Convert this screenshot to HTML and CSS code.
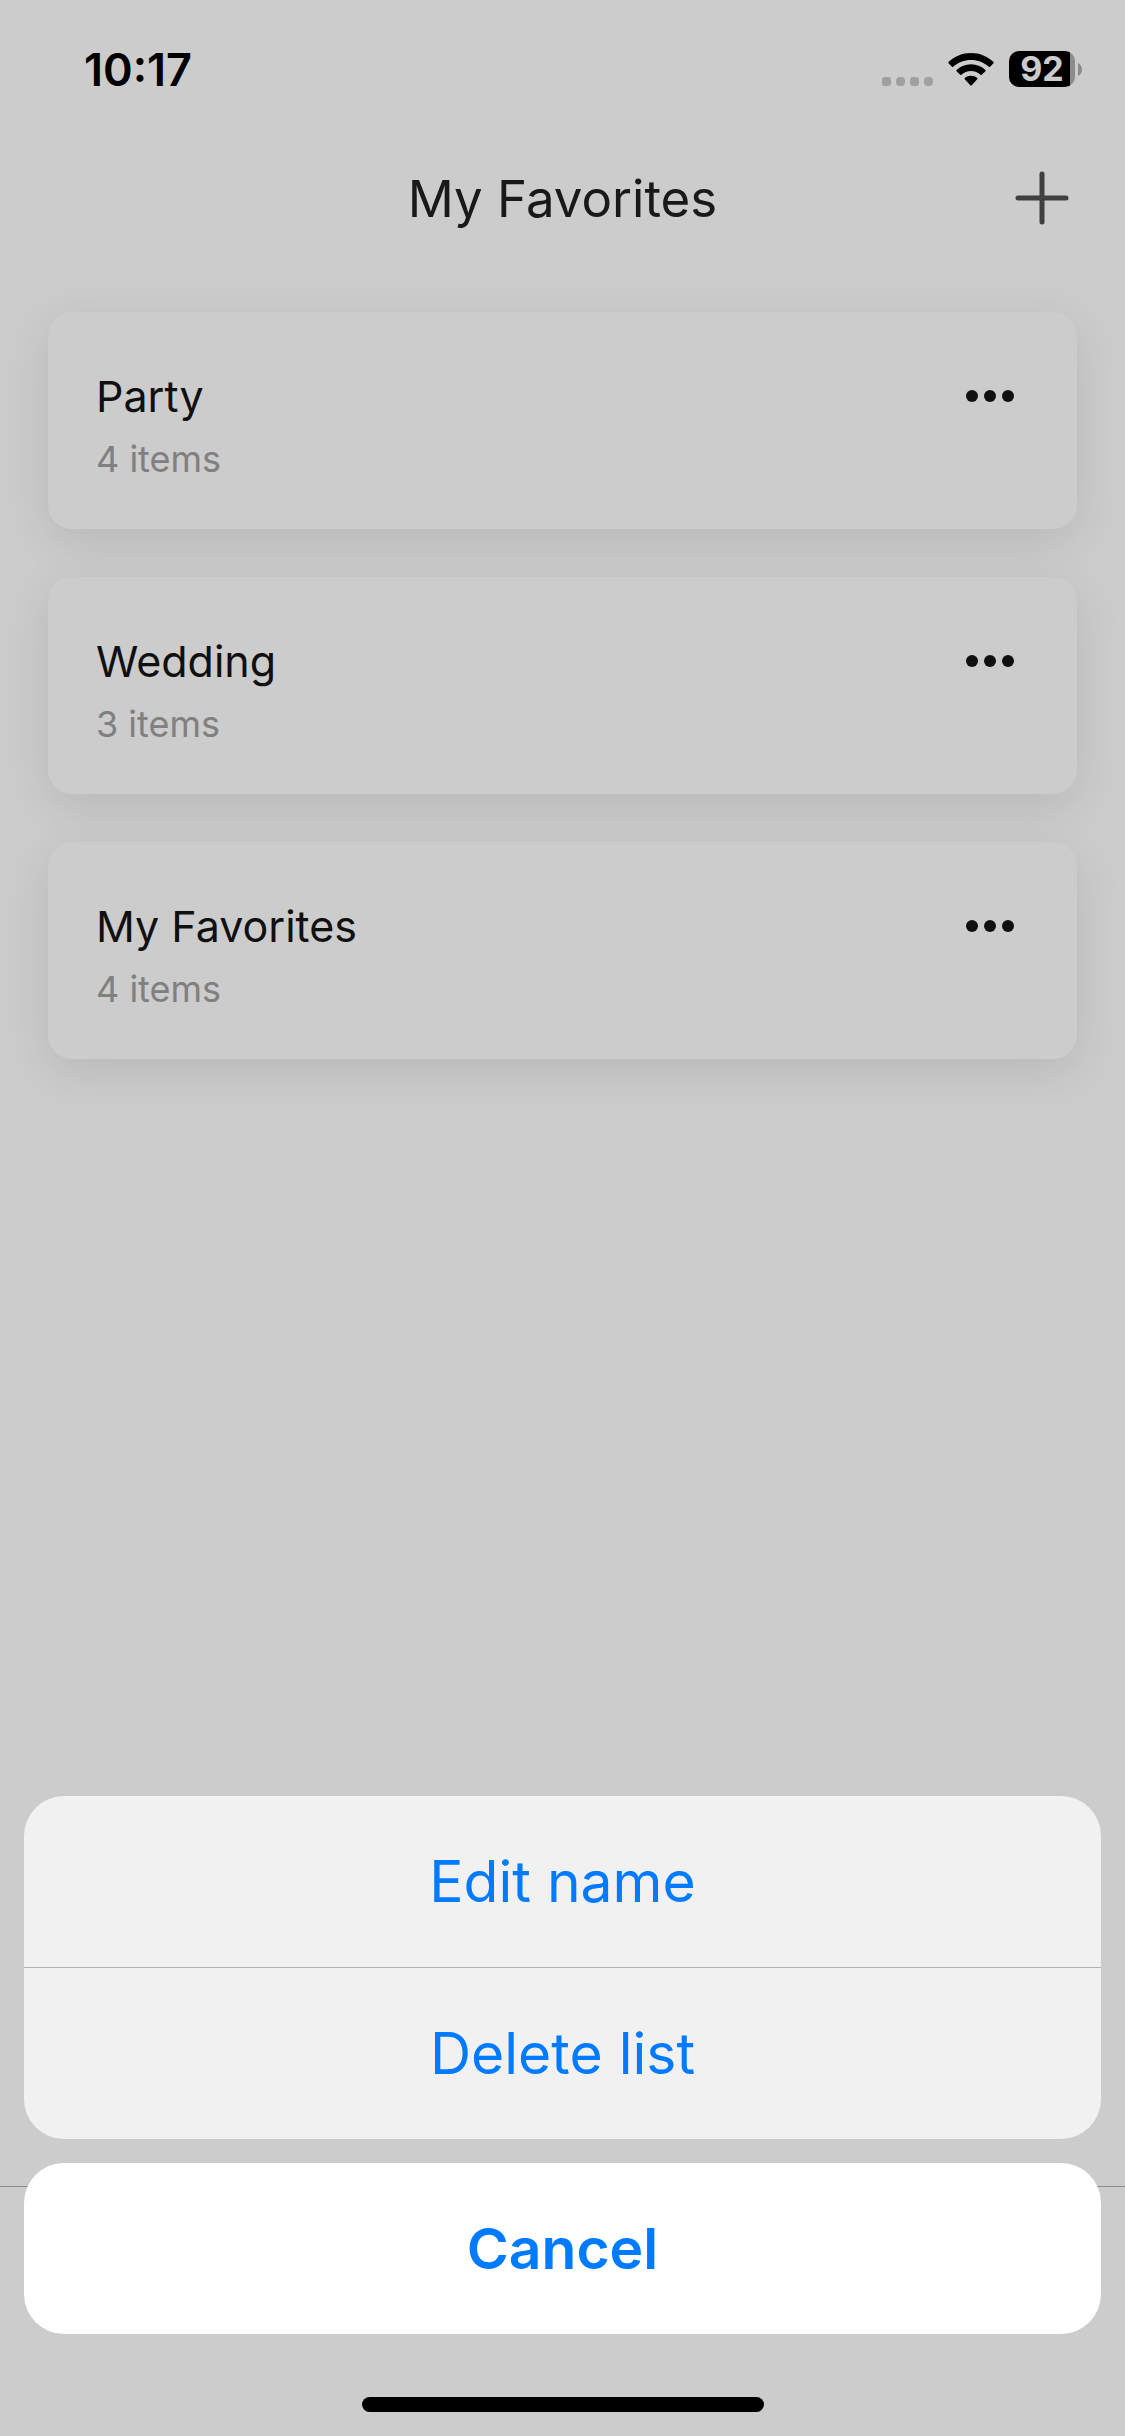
FILE: index.html
```
<!DOCTYPE html>
<html lang="en">
<head>
    <meta charset="UTF-8">
    <meta name="viewport" content="width=device-width, initial-scale=1.0">
    <title>My Favorites</title>
    <link rel="stylesheet" href="styles.css">
</head>
<body>
    <div class="app">
        <div class="status-bar">
            <span class="status-time">10:17</span>
            <div class="status-icons">
                <svg class="signal" viewBox="0 0 51 9" aria-hidden="true">
                    <rect x="0" width="9" height="9" rx="3"/>
                    <rect x="14" width="9" height="9" rx="4"/>
                    <rect x="28" width="9" height="9" rx="3"/>
                    <rect x="42" width="9" height="9" rx="4"/>
                </svg>
                <svg class="wifi" viewBox="0 0 46 33" aria-hidden="true">
                    <path d="M23 0C14.300 0 6.400 3.400 .500 9Q0 9.600 .500 10.200L4 13.700Q4.600 14.300 5.200 13.700C9.900 9.400 16.100 6.900 23 6.900S36.100 9.400 40.800 13.700Q41.400 14.300 42 13.700L45.500 10.200Q46 9.600 45.500 9C39.600 3.400 31.700 0 23 0Z"/>
                    <path d="M23 11.300C17.500 11.300 12.400 13.500 8.600 17Q8 17.600 8.600 18.200L12.200 21.800Q12.800 22.300 13.400 21.800C15.900 19.500 19.300 18.100 23 18.100S30.100 19.500 32.600 21.800Q33.200 22.300 33.800 21.800L37.400 18.200Q38 17.600 37.400 17C33.600 13.500 28.500 11.300 23 11.300Z"/>
                    <path d="M23 22.700C20.700 22.700 18.500 23.500 16.800 24.900Q16.100 25.500 16.800 26.200L22.300 32.200Q23 32.900 23.700 32.200L29.200 26.200Q29.900 25.500 29.200 24.900C27.500 23.500 25.300 22.700 23 22.700Z"/>
                </svg>
                <div class="battery">
                    <span class="battery-level">92</span>
                    <svg class="battery-tip" viewBox="0 0 4 13" aria-hidden="true">
                        <path d="M0 0C2.500 1.200 4 3.500 4 6.500S2.500 11.800 0 13Z"/>
                    </svg>
                </div>
            </div>
        </div>

        <header class="header">
            <h1>My Favorites</h1>
            <button class="add-button" aria-label="Add list">
                <svg viewBox="0 0 54 54" aria-hidden="true">
                    <path d="M27 3V51M3 27H51"/>
                </svg>
            </button>
        </header>

        <ul class="lists">
            <li class="card">
                <div class="card-text">
                    <h2>Party</h2>
                    <p>4 items</p>
                </div>
                <button class="more-button" aria-label="Options for Party">
                    <svg viewBox="0 0 48 12" aria-hidden="true">
                        <circle cx="6" cy="6" r="6"/>
                        <circle cx="24" cy="6" r="6"/>
                        <circle cx="42" cy="6" r="6"/>
                    </svg>
                </button>
            </li>
            <li class="card">
                <div class="card-text">
                    <h2>Wedding</h2>
                    <p>3 items</p>
                </div>
                <button class="more-button" aria-label="Options for Wedding">
                    <svg viewBox="0 0 48 12" aria-hidden="true">
                        <circle cx="6" cy="6" r="6"/>
                        <circle cx="24" cy="6" r="6"/>
                        <circle cx="42" cy="6" r="6"/>
                    </svg>
                </button>
            </li>
            <li class="card">
                <div class="card-text">
                    <h2>My Favorites</h2>
                    <p>4 items</p>
                </div>
                <button class="more-button" aria-label="Options for My Favorites">
                    <svg viewBox="0 0 48 12" aria-hidden="true">
                        <circle cx="6" cy="6" r="6"/>
                        <circle cx="24" cy="6" r="6"/>
                        <circle cx="42" cy="6" r="6"/>
                    </svg>
                </button>
            </li>
        </ul>

        <div class="tab-bar"></div>
    </div>

    <div class="overlay">
        <div class="sheet" role="dialog" aria-label="List options">
            <div class="sheet-group">
                <button class="sheet-button">Edit name</button>
                <button class="sheet-button">Delete list</button>
            </div>
            <button class="sheet-button cancel">Cancel</button>
        </div>
        <div class="home-indicator"></div>
    </div>
</body>
</html>
```
FILE: styles.css
```
:root {
    --blue: #007aff;
    --text: #141414;
    --muted: #a0a0a0;
}

* {
    margin: 0;
    padding: 0;
    box-sizing: border-box;
    font-family: Inter, "Liberation Sans", sans-serif;
}

body {
    background-color: white;
}

button {
    background: none;
    border: none;
    cursor: pointer;
}

svg {
    display: block;
}

.app {
    min-height: 100vh;
    display: flex;
    flex-direction: column;
}

/* Status bar */
.status-bar {
    display: flex;
    justify-content: space-between;
    align-items: center;
    height: 138px;
    padding: 0 43px 0 84px;
}

.status-time {
    font-size: 45px;
    font-weight: 600;
}

.status-icons {
    display: flex;
    align-items: center;
    gap: 15px;
}

.signal {
    width: 51px;
    height: 9px;
    margin-top: 24px;
    fill: #c8c8c8;
}

.wifi {
    width: 46px;
    height: 33px;
}

.battery {
    display: flex;
    align-items: center;
    gap: 3px;
}

.battery-level {
    width: 66px;
    height: 36px;
    border-radius: 10px;
    background: linear-gradient(to right, black 61px, #b0b0b0 61px);
    color: white;
    font-size: 34px;
    font-weight: 700;
    line-height: 36px;
    text-align: center;
}

.battery-tip {
    width: 4px;
    height: 13px;
    fill: #b0b0b0;
}

/* Header */
.header {
    display: grid;
    grid-template-columns: 1fr auto 1fr;
    align-items: center;
    height: 120px;
    padding: 0 56px;
}

.header h1 {
    grid-column: 2;
    font-size: 51px;
    font-weight: 400;
    color: #202020;
}

.add-button {
    justify-self: end;
}

.add-button svg {
    width: 54px;
    height: 54px;
    fill: none;
    stroke: #505050;
    stroke-width: 5;
    stroke-linecap: round;
}

/* Lists */
.lists {
    flex: 1;
    display: flex;
    flex-direction: column;
    gap: 48px;
    padding: 54px 48px;
    list-style: none;
}

.card {
    position: relative;
    display: flex;
    justify-content: space-between;
    align-items: flex-start;
    padding: 54px 48px 42px;
    border-radius: 24px;
    background-color: white;
    box-shadow: 0 12px 48px rgba(0, 0, 0, 0.1);
}

/* each card stays above the shadow of the next one */
.card:nth-child(1) {
    z-index: 3;
}

.card:nth-child(2) {
    z-index: 2;
}

.card h2 {
    font-size: 43px;
    font-weight: 400;
    line-height: 60px;
    color: var(--text);
}

.card p {
    margin-top: 8px;
    margin-bottom: 3px;
    font-size: 36px;
    line-height: 50px;
    color: var(--muted);
}

.more-button {
    padding: 24px 15px;
}

.more-button svg {
    width: 48px;
    height: 12px;
    fill: var(--text);
}

.tab-bar {
    height: 250px;
    border-top: 1px solid #b0b0b0;
}

/* Action sheet */
.overlay {
    position: fixed;
    inset: 0;
    z-index: 10;
    display: flex;
    flex-direction: column;
    justify-content: flex-end;
    padding: 24px;
    background-color: rgba(0, 0, 0, 0.2);
}

.sheet {
    display: flex;
    flex-direction: column;
    gap: 24px;
}

.sheet-group {
    border-radius: 40px;
    background-color: #f1f1f1;
    overflow: hidden;
}

.sheet-button {
    display: block;
    width: 100%;
    padding: 48px;
    font-size: 57px;
    line-height: 75px;
    color: var(--blue);
}

.sheet-button + .sheet-button {
    border-top: 1px solid #b0b0b0;
}

.cancel {
    border-radius: 40px;
    background-color: white;
    font-weight: 600;
}

.home-indicator {
    width: 402px;
    height: 15px;
    margin: 63px auto 0;
    border-radius: 8px;
    background-color: black;
}
```
